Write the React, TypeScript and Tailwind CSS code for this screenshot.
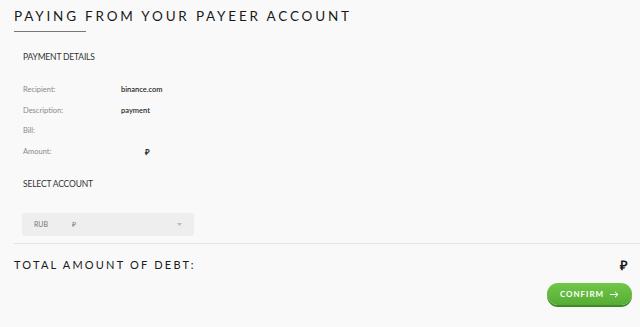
import React from "react";

const rows = [
  { label: "Recipient:", value: "binance.com" },
  { label: "Description:", value: "payment" },
  { label: "Bill:", value: "" },
  { label: "Amount:", value: "₽", indent: true },
];

const App = () => {
  return (
    <div className="w-[640px] h-[327px] bg-[#f9f9f9] overflow-hidden font-['Lato',sans-serif] text-[#222]">
      <div className="pl-[14px] pt-[8px]">
        <h1 className="text-[13.5px] leading-[16px] tracking-[2.8px] font-normal text-[#1a1a1a] whitespace-nowrap">
          PAYING FROM YOUR PAYEER ACCOUNT
        </h1>
        <div className="mt-[7px] w-[72px] h-px bg-[#777]" />
      </div>

      <div className="pl-[23px] pt-[20px]">
        <h2 className="text-[8.5px] leading-[10px] text-[#333] tracking-[-0.02em]">PAYMENT DETAILS</h2>
        <div className="mt-[23px] flex flex-col gap-[10.5px]">
          {rows.map((r) => (
            <div key={r.label} className="flex items-center h-[10px] text-[7.5px]">
              <span className="w-[98px] text-[#8a8a8a]">{r.label}</span>
              <span className={`text-[#2a2a2a] font-semibold ${r.indent ? "pl-[24px] text-[8px]" : ""}`}>{r.value}</span>
            </div>
          ))}
        </div>
        <h2 className="mt-[22px] text-[8.5px] leading-[10px] text-[#333] tracking-[-0.02em]">SELECT ACCOUNT</h2>
        <div className="mt-[24px] w-[172px] h-[23px] rounded-[3px] bg-[#eeeeee] flex items-center px-[12px] text-[7px] text-[#777] -ml-[1px]">
          <span className="w-[38px]">RUB</span>
          <span>₽</span>
          <svg className="ml-auto" width="5" height="3" viewBox="0 0 5 3">
            <path d="M0 0h5L2.5 3z" fill="#bbb" />
          </svg>
        </div>
      </div>

      <div className="ml-[14px] mt-[7px] h-px bg-[#e3e3e3]" />

      <div className="flex items-center justify-between pl-[14px] pr-[12px] pt-[12px]">
        <span className="text-[11px] leading-[14px] tracking-[2.2px] text-[#1a1a1a] whitespace-nowrap">
          TOTAL AMOUNT OF DEBT:
        </span>
        <span className="text-[13px] font-bold text-[#1a1a1a]">₽</span>
      </div>

      <div className="flex justify-end pr-[8px] pt-[8px]">
        <button className="w-[85px] h-[22px] rounded-full bg-gradient-to-b from-[#72c74a] to-[#55ad33] shadow-[0_2px_0_#3f8a25] flex items-center justify-center gap-[6px] text-white text-[8px] font-bold tracking-[0.12em]">
          CONFIRM
          <svg width="9" height="7" viewBox="0 0 9 7" fill="none" stroke="white" strokeWidth="1">
            <path d="M0 3.5h8M5 0.8l3 2.7-3 2.7" />
          </svg>
        </button>
      </div>
    </div>
  );
};

export default App;
